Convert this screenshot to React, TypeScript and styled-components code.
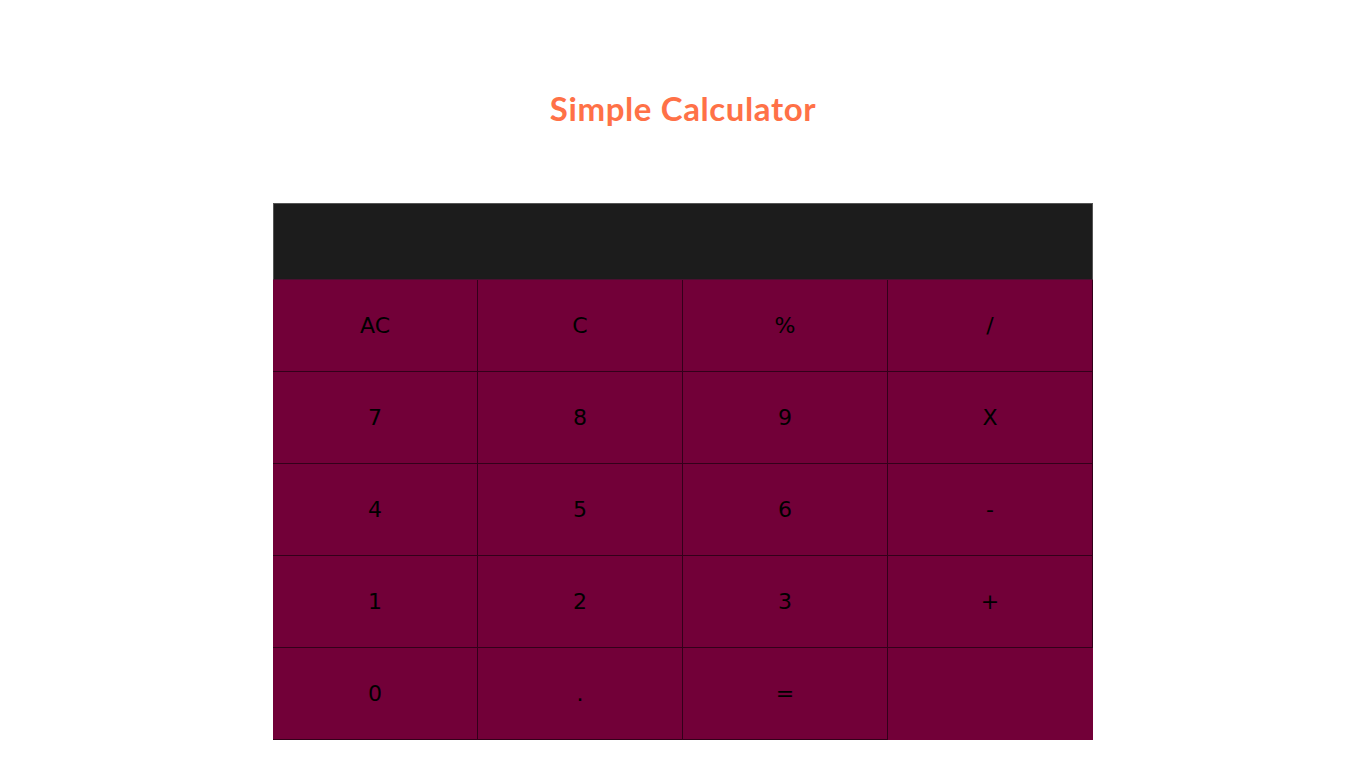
import React from "react";
import styled, { createGlobalStyle } from "styled-components";

const Global = createGlobalStyle`
  html, body { margin: 0; padding: 0; background: #ffffff; }
  body { font-family: "DejaVu Sans", sans-serif; }
`;

const Page = styled.div`
  display: flex;
  flex-direction: column;
  align-items: center;
  padding-top: 88px;
  padding-right: 2px;
`;

const Title = styled.h1`
  margin: 0 0 75px 0;
  font-family: Lato, "Open Sans", sans-serif;
  font-weight: 700;
  font-size: 33px;
  line-height: 40px;
  color: #ff7147;
  letter-spacing: 0.6px;
`;

const Calculator = styled.div`
  width: 820px;
  background: #720038;
  display: flex;
  flex-direction: column;
`;

const Display = styled.div`
  box-sizing: border-box;
  height: 77px;
  background: #1c1c1c;
  border: 1px solid #555555;
  border-bottom-color: #4a1030;
`;

const Keys = styled.div`
  display: grid;
  grid-template-columns: repeat(4, 205px);
  grid-auto-rows: 92px;
`;

const Key = styled.button`
  box-sizing: border-box;
  margin: 0;
  padding: 0;
  background: #720038;
  border: none;
  border-right: 1px solid #33001a;
  border-bottom: 1px solid #33001a;
  font-family: "DejaVu Sans", sans-serif;
  font-size: 22px;
  color: #000000;
  display: flex;
  align-items: center;
  justify-content: center;
  cursor: pointer;
`;

const keys = [
  "AC", "C", "%", "/",
  "7", "8", "9", "X",
  "4", "5", "6", "-",
  "1", "2", "3", "+",
  "0", ".", "=",
];

export default function App() {
  return (
    <>
      <Global />
      <Page>
        <Title>Simple Calculator</Title>
        <Calculator>
          <Display />
          <Keys>
            {keys.map((k) => (
              <Key key={k}>{k}</Key>
            ))}
          </Keys>
        </Calculator>
      </Page>
    </>
  );
}
